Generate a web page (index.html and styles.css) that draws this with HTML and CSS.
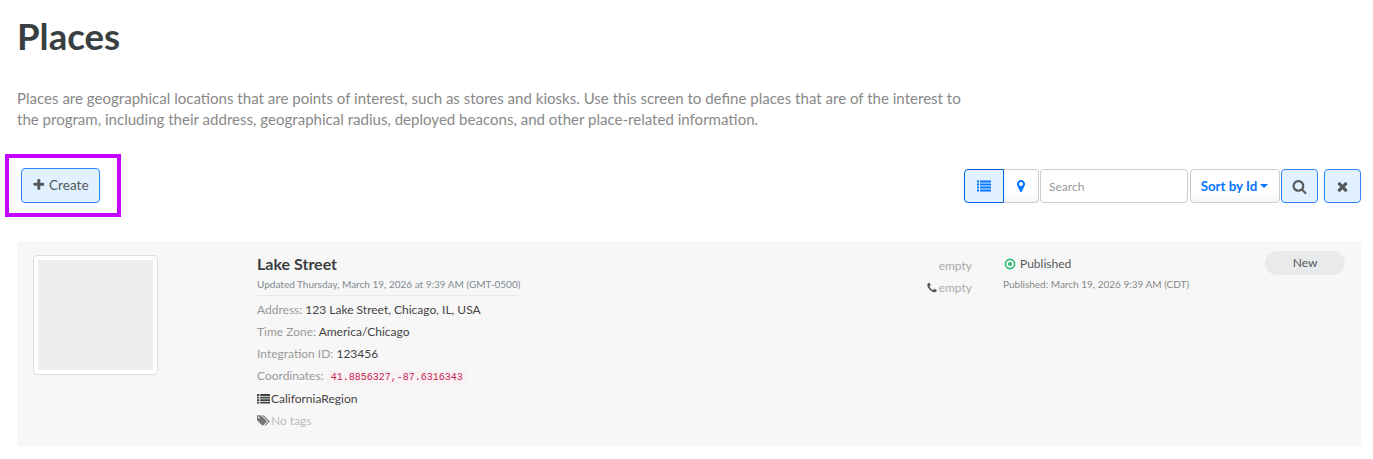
FILE: index.html
```html
<!DOCTYPE html>
<html lang="en">
<head>
    <meta charset="UTF-8">
    <title>Places</title>
    <link rel="stylesheet" href="styles.css">
</head>
<body>
    <h1>Places</h1>
    <p class="intro">Places are geographical locations that are points of interest, such as stores and kiosks. Use this screen to define places that are of the interest to the program, including their address, geographical radius, deployed beacons, and other place-related information.</p>

    <div class="toolbar">
        <div class="highlight">
            <button class="btn btn-active btn-create">
                <svg class="icon" viewBox="0 0 1792 1792"><path d="M1600 736v192q0 40-28 68t-68 28h-416v416q0 40-28 68t-68 28h-192q-40 0-68-28t-28-68v-416h-416q-40 0-68-28t-28-68v-192q0-40 28-68t68-28h416v-416q0-40 28-68t68-28h192q40 0 68 28t28 68v416h416q40 0 68 28t28 68z"/></svg>
                Create
            </button>
        </div>
        <div class="tools">
            <div class="view-switch">
                <button class="view-btn view-list">
                    <svg class="icon" viewBox="0 0 1792 1792"><path d="M0 256h256v256H0zM384 256h1408v256H384zM0 640h256v256H0zM384 640h1408v256H384zM0 1024h256v256H0zM384 1024h1408v256H384zM0 1408h256v256H0zM384 1408h1408v256H384z" transform="translate(0 -64)"/></svg>
                </button>
                <button class="view-btn view-map">
                    <svg class="icon" viewBox="0 0 1792 1792"><path d="M1152 640q0-106-75-181t-181-75-181 75-75 181 75 181 181 75 181-75 75-181zm256 0q0 109-33 179l-364 774q-16 33-47.500 52t-67.500 19-67.500-19-46.500-52l-365-774q-33-70-33-179 0-212 150-362t362-150 362 150 150 362z"/></svg>
                </button>
            </div>
            <input class="search" type="text" placeholder="Search">
            <button class="sort">Sort by Id<span class="caret"></span></button>
            <button class="btn btn-active btn-square">
                <svg class="icon" viewBox="0 0 1792 1792"><path d="M1216 832q0-185-131.500-316.500t-316.500-131.500-316.500 131.500-131.500 316.500 131.500 316.500 316.500 131.500 316.500-131.500 131.500-316.500zm512 832q0 52-38 90t-90 38q-54 0-90-38l-343-342q-179 124-399 124-143 0-273.500-55.500t-225-150-150-225-55.500-273.500 55.500-273.500 150-225 225-150 273.500-55.500 273.500 55.500 225 150 150 225 55.500 273.500q0 220-124 399l343 343q37 37 37 90z"/></svg>
            </button>
            <button class="btn btn-active btn-square btn-clear">
                <svg class="icon" viewBox="0 0 1792 1792"><path d="M1490 1322q0 40-28 68l-136 136q-28 28-68 28t-68-28l-294-294-294 294q-28 28-68 28t-68-28l-136-136q-28-28-28-68t28-68l294-294-294-294q-28-28-28-68t28-68l136-136q28-28 68-28t68 28l294 294 294-294q28-28 68-28t68 28l136 136q28 28 28 68t-28 68l-294 294 294 294q28 28 28 68z"/></svg>
            </button>
        </div>
    </div>

    <div class="card">
        <div class="thumb"><div class="thumb-inner"></div></div>
        <div class="details">
            <h2>Lake Street</h2>
            <div class="updated">Updated Thursday, March 19, 2026 at 9:39 AM (GMT-0500)</div>
            <div class="row"><span class="label">Address:</span> 123 Lake Street, Chicago, IL, USA</div>
            <div class="row"><span class="label">Time Zone:</span> America/Chicago</div>
            <div class="row"><span class="label">Integration ID:</span> 123456</div>
            <div class="row"><span class="label">Coordinates:</span> <code>41.8856327,-87.6316343</code></div>
            <div class="row row-region">
                <svg class="icon" viewBox="0 0 1792 1792"><path d="M0 288h320v256H0zM448 288h1344v256H448zM0 640h320v256H0zM448 640h1344v256H448zM0 992h320v256H0zM448 992h1344v256H448zM0 1344h320v256H0zM448 1344h1344v256H448z"/></svg>CaliforniaRegion
            </div>
            <div class="row no-tags">
                <svg class="icon icon-tags" viewBox="0 0 1920 1792"><path d="M384 448q0-53-37.500-90.500t-90.500-37.500-90.500 37.500-37.500 90.500 37.500 90.500 90.500 37.500 90.500-37.500 37.500-90.500zm1067 576q0 53-37 90l-491 492q-39 37-91 37-53 0-90-37l-715-716q-38-37-64.500-101t-26.500-117v-416q0-52 38-90t90-38h416q53 0 117 26.500t102 64.500l715 714q37 39 37 91zm384 0q0 53-37 90l-491 492q-39 37-91 37-36 0-59-14t-53-45l470-470q37-37 37-90 0-52-37-91l-715-714q-38-38-102-64.500t-117-26.500h224q53 0 117 26.500t102 64.500l715 714q37 39 37 91z"/></svg>No tags
            </div>
        </div>
        <div class="contact">
            <div>empty</div>
            <div class="phone">
                <svg class="icon" viewBox="0 0 1792 1792"><path d="M1600 1240q0 27-10 70.500t-21 68.500q-21 50-122 106-94 51-186 51-27 0-53-3.500t-57.500-12.500-47-14.500-55.500-20.500-49-18q-98-35-175-83-127-79-264-216t-216-264q-48-77-83-175-3-9-18-49t-20.500-55.500-14.500-47-12.500-57.500-3.500-53q0-92 51-186 56-101 106-122 25-11 68.500-21t70.500-10q14 0 21 3 18 6 53 76 11 19 30 54t35 63.500 31 53.500q3 4 17.500 25t21.500 35.500 7 28.500q0 20-28.500 50t-62 55-62 53-28.500 46q0 9 5 22.500t8.500 20.500 14 24 11.500 19q76 137 174 235t235 174q2 1 19 11.500t24 14 20.500 8.500 22.500 5q18 0 46-28.500t53-62 55-62 50-28.500q14 0 28.500 7t35.500 21.500 25 17.500q25 15 53.500 31t63.500 35 54 30q70 35 76 53 3 7 3 21z"/></svg>empty
            </div>
        </div>
        <div class="status">
            <div class="status-line">
                <svg class="dot" viewBox="0 0 12 12"><circle cx="6" cy="6" r="4.6" fill="none" stroke="#2eb872" stroke-width="1.6"/><circle cx="6" cy="6" r="2" fill="#2eb872"/></svg>
                Published
            </div>
            <div class="status-date">Published: March 19, 2026 9:39 AM (CDT)</div>
        </div>
        <div class="badge">New</div>
    </div>
</body>
</html>
```

FILE: styles.css
```css
* {
    box-sizing: border-box;
}

body {
    margin: 0;
    padding: 0 12px 0 5px;
    font-family: Lato, sans-serif;
    font-size: 12px;
    color: #373a3c;
    background: #fff;
}

h1 {
    margin: 0;
    padding: 15px 0 0 12px;
    font-size: 36.6px;
    line-height: 43px;
    font-weight: 700;
    color: #3a3f42;
}

.intro {
    width: 960px;
    margin: 30px 0 0 12px;
    font-size: 15.06px;
    line-height: 21px;
    color: #888;
}

.toolbar {
    display: flex;
    justify-content: space-between;
    align-items: center;
    margin-top: 24px;
}

.highlight {
    width: 116px;
    height: 63px;
    padding: 10px 0 0 12px;
    border: 4px solid #c400ff;
}

.icon {
    width: 1em;
    height: 1em;
    fill: currentColor;
    flex: none;
}

button {
    font-family: inherit;
    cursor: pointer;
}

.btn {
    display: flex;
    align-items: center;
    justify-content: center;
    height: 35px;
    padding: 0;
    border: 1px solid #2a85ff;
    border-radius: 4px;
    color: #55595c;
}

.btn-active {
    background: #e1f1ff;
}

.btn-create {
    width: 79px;
    gap: 3px;
    padding-bottom: 1px;
    font-size: 13.6px;
}

.btn-square {
    width: 37px;
    height: 34px;
    font-size: 15px;
}

.btn-clear {
    margin-left: 6px;
}

.tools {
    display: flex;
    align-items: center;
    margin-top: 1px;
}

.view-switch {
    display: flex;
}

.view-btn {
    display: flex;
    align-items: center;
    justify-content: center;
    height: 34px;
    padding: 0;
    font-size: 14px;
    color: #0275ff;
}

.view-list {
    width: 40px;
    border: 1px solid #0264d8;
    border-radius: 4px 0 0 4px;
    background: #e1f1ff;
}

.view-map {
    width: 35px;
    border: 1px solid #ccc;
    border-left: 0;
    border-radius: 0 4px 4px 0;
    background: linear-gradient(#fff 70%, #f4f4f4);
}

.search {
    width: 148px;
    height: 34px;
    margin-left: 1px;
    padding: 0 8px;
    border: 1px solid #ccc;
    border-radius: 4px;
    font-family: inherit;
    font-size: 12px;
    outline: none;
}

.search::placeholder {
    color: #999;
}

.sort {
    display: flex;
    align-items: center;
    justify-content: center;
    width: 90px;
    height: 34px;
    margin: 0 1px 0 2px;
    padding: 0 1px 1px 0;
    border: 1px solid #ccc;
    border-radius: 4px;
    background: linear-gradient(#fff 70%, #f4f4f4);
    font-size: 13.3px;
    font-weight: 700;
    color: #0275ff;
}

.caret {
    width: 0;
    height: 0;
    margin-left: 3px;
    border-top: 4px solid #0275ff;
    border-left: 4px solid transparent;
    border-right: 4px solid transparent;
}

.card {
    display: flex;
    height: 205px;
    margin: 24px 0 0 12px;
    padding: 14px 16px;
    border-radius: 2px;
    background: #f7f7f7;
}

.thumb {
    width: 125px;
    height: 120px;
    padding: 4px;
    border: 1px solid #ddd;
    border-radius: 4px;
    background: #fff;
}

.thumb-inner {
    height: 100%;
    background: #eee;
}

.details {
    width: 670px;
    margin-left: 99px;
}

h2 {
    margin: -1px 0 0;
    font-size: 16px;
    line-height: 20px;
    font-weight: 700;
    color: #3a3f42;
}

.updated {
    width: 265px;
    margin-bottom: 3px;
    padding: 3px 0;
    border-bottom: 1px solid #e9e9e9;
    font-size: 10px;
    line-height: 15px;
    color: #818a91;
}

.row {
    height: 22px;
    line-height: 22px;
    white-space: nowrap;
    color: #444;
}

.row-region {
    margin-top: 1px;
}

.row .icon {
    width: 13px;
    height: 13px;
    margin-right: 1px;
    vertical-align: -2px;
}

.label {
    color: #999;
}

code {
    padding: 2px 4px;
    border-radius: 3px;
    background: #f9f2f4;
    font-family: "Liberation Mono", monospace;
    font-size: 10px;
    color: #c7254e;
}

.row.no-tags {
    color: #bbb;
}

.no-tags .icon {
    color: #777;
}

.contact {
    width: 45px;
    text-align: right;
    line-height: 22px;
    color: #aaa;
}

.phone {
    display: flex;
    align-items: center;
    justify-content: flex-end;
    gap: 1px;
}

.phone .icon {
    width: 12px;
    height: 12px;
    color: #55595c;
}

.status {
    width: 262px;
    margin-left: 31px;
}

.status-line {
    display: flex;
    align-items: center;
    gap: 4px;
    margin-left: 1px;
    line-height: 18px;
    color: #55595c;
}

.dot {
    width: 12px;
    height: 12px;
}

.status-date {
    margin-top: 4px;
    font-size: 10px;
    line-height: 14px;
    color: #888;
}

.badge {
    width: 80px;
    height: 24px;
    margin-top: -4px;
    border-radius: 12px;
    background: #e8eaeb;
    line-height: 23px;
    text-align: center;
    color: #55595c;
}
```
